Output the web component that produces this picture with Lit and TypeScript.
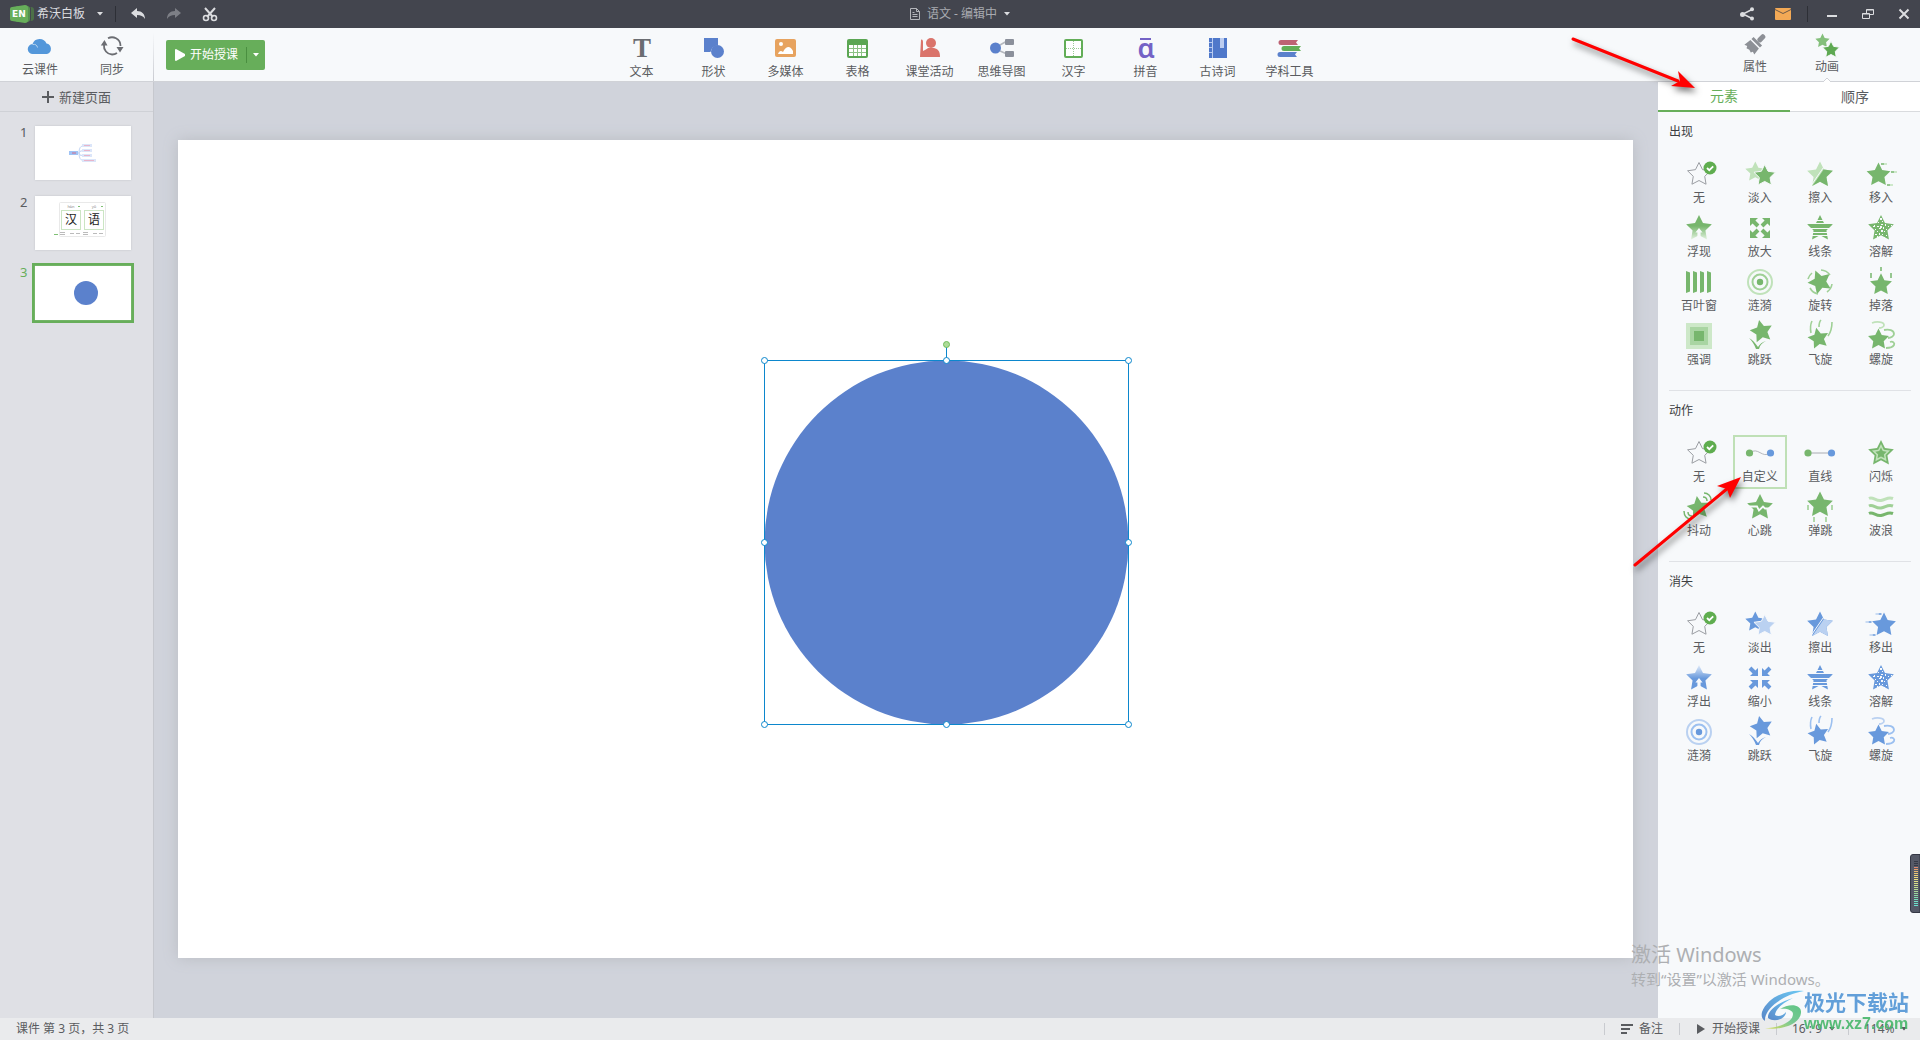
import { LitElement, html, svg, css } from "lit";
import { customElement, state } from "lit/decorators.js";
import { classMap } from "lit/directives/class-map.js";

interface Tone {
  name: string;
  dark: string;
  mid: string;
  light: string;
}

const GREEN: Tone = { name: "green", dark: "#77b66d", mid: "#9fd096", light: "#c0e2ba" };
const BLUE: Tone = { name: "blue", dark: "#6899dc", mid: "#9cc0f0", light: "#bad1f1" };
const PAPER = "#f7f9fb";

function starPoints(cx: number, cy: number, r: number, turn = 0, inner = 0.5): string {
  const pts: string[] = [];
  for (let i = 0; i < 10; i++) {
    const radius = i % 2 ? r * inner : r;
    const a = ((-90 + turn + i * 36) * Math.PI) / 180;
    pts.push(`${(cx + radius * Math.cos(a)).toFixed(2)},${(cy + radius * Math.sin(a)).toFixed(2)}`);
  }
  return pts.join(" ");
}

const star = (cx: number, cy: number, r: number, fill: string, turn = 0) =>
  svg`<polygon points=${starPoints(cx, cy, r, turn)} fill=${fill}></polygon>`;

const none = () => svg`
  <polygon points=${starPoints(16, 16.5, 12)} fill="none" stroke="#9b9ea3"></polygon>
  <circle cx="27" cy="10" r="6.5" fill="#5fad4f"></circle>
  <path d="M24 10l2.3 2.2 3.9-3.8" fill="none" stroke="#fff" stroke-width="1.8"></path>`;

const fade = (t: Tone, out: boolean) => svg`
  ${star(11.3, 14, 10.5, out ? t.dark : t.light)}
  <polygon points=${starPoints(20.7, 17.8, 11.3)} fill=${out ? t.light : t.dark} stroke=${PAPER} stroke-width="1"></polygon>`;

const wipe = (t: Tone, out: boolean) => svg`
  <clipPath id="wipe-${t.name}"><path d="M27.5 0H32V32H5.6z"></path></clipPath>
  ${star(16, 17, 13.5, out ? t.dark : t.light)}
  <g clip-path="url(#wipe-${t.name})">${star(16, 17, 13.5, out ? t.light : t.dark)}</g>
  <path d="M23.2 4L6.400 28.500" stroke=${PAPER} stroke-width="1"></path>`;

const slide = (t: Tone, out: boolean) => {
  const marks = svg`
    <path d="M16 6h3M26 14h3M22 27h3" stroke=${t.dark} stroke-width="1.6"></path>
    <path d="M19 6h3M29 14h3M25 27h3" stroke=${t.light} stroke-width="1.6"></path>`;
  return out
    ? svg`<g transform="translate(32.5 0) scale(-1 1)">${marks}${star(13.5, 17, 12.5, t.dark)}</g>`
    : svg`${marks}${star(13.5, 17, 12.5, t.dark)}`;
};

const float = (t: Tone, out: boolean) => svg`
  <linearGradient id="float-${t.name}" x1="0" y1="0" x2="0" y2="1">
    <stop offset=${out ? "0" : "0.45"} stop-color=${out ? "#e3edfa" : t.dark}></stop>
    <stop offset=${out ? "0.55" : "1"} stop-color=${out ? t.dark : "#e2f2df"}></stop>
  </linearGradient>
  <polygon points=${starPoints(16, 16.5, 13.5)} fill="url(#float-${t.name})"></polygon>
  <path d="M16 16l3.600 4.400h-2V26h-3.200v-5.600h-2z" fill=${PAPER}></path>`;

const cornerArrow = "M0 0h8L5.400 2.600l4 4-2.800 2.800-4-4L0 8z";
const zoomIn = (t: Tone) => svg`<g fill=${t.dark}>
  <path d=${cornerArrow} transform="translate(6 6)"></path>
  <path d=${cornerArrow} transform="translate(26 6) scale(-1 1)"></path>
  <path d=${cornerArrow} transform="translate(6 26) scale(1 -1)"></path>
  <path d=${cornerArrow} transform="translate(26 26) scale(-1 -1)"></path></g>`;
const zoomOut = (t: Tone) => svg`<g fill=${t.dark}>
  <path d=${cornerArrow} transform="translate(14 14) scale(-1 -1)"></path>
  <path d=${cornerArrow} transform="translate(18 14) scale(1 -1)"></path>
  <path d=${cornerArrow} transform="translate(14 18) scale(-1 1)"></path>
  <path d=${cornerArrow} transform="translate(18 18)"></path></g>`;

const lines = (t: Tone) => svg`
  ${star(16, 16.500, 13.500, t.dark)}
  <path d="M2 8.500h28M2 11.500h28M2 16.500h28M2 20.500h28M2 23.500h28" stroke=${PAPER} stroke-width="1"></path>`;

const SPECKS = [
  [15, 6], [17, 9], [13, 10], [16, 12], [20, 12], [9, 13], [12, 14], [23, 14], [18, 15], [14, 16],
  [21, 17], [10, 17], [16, 18], [12, 19], [19, 19], [23, 20], [14, 21], [17, 22], [10, 22], [21, 23],
  [12, 24], [8, 14], [26, 13], [19, 25], [15, 14],
];
const dissolve = (t: Tone) => svg`
  ${star(16, 16.500, 13.500, t.dark)}
  ${SPECKS.map(([x, y], i) => svg`<rect x=${x} y=${y} width=${i % 3 ? 1 : 2} height=${i % 4 ? 1 : 2} fill=${PAPER}></rect>`)}`;

const blinds = (t: Tone) => svg`<path fill=${t.dark}
  d="M3 5l4 1.500v19L3 27zM10 5l4 1.500v19L10 27zM17 5l4 1.500v19L17 27zM24 5l4 1.500v19L24 27z"></path>`;

const ripple = (t: Tone) => svg`
  <circle cx="16" cy="16" r="12" fill="none" stroke=${t.light} stroke-width="2"></circle>
  <circle cx="16" cy="16" r="7.500" fill="none" stroke=${t.mid} stroke-width="2"></circle>
  <circle cx="16" cy="16" r="3.200" fill=${t.dark}></circle>`;

const spin = (t: Tone) => svg`
  ${star(16, 16, 12.500, t.dark, -22)}
  <g fill="none" stroke=${t.mid} stroke-width="1.600">
    <path d="M17 4a12 12 0 0 1 9 5"></path><path d="M28 18a12 12 0 0 1-5 8"></path>
    <path d="M14 28a12 12 0 0 1-8-6"></path><path d="M4 13a12 12 0 0 1 4-6"></path>
  </g>`;

const drop = (t: Tone) => svg`
  ${star(16, 18.800, 11.500, t.dark)}
  <path d="M16 1v4M6 7v5M26 7v5" stroke=${t.dark} stroke-width="1.500"></path>`;

const emphasis = (t: Tone) => svg`
  <rect x="3" y="3" width="26" height="26" fill="#cde8c8"></rect>
  <rect x="7" y="7" width="18" height="18" fill="#a9d5a2"></rect>
  <rect x="11" y="11" width="10" height="10" fill=${t.dark}></rect>`;

const jump = (t: Tone) => svg`
  ${star(17.500, 11.500, 11.800, t.dark, -12)}
  <path d="M5 18c4 2 6 5 9 9 2-3 4-5 8-6-4 2-6 4-7 8h-3C10 24 8 21 5 18z" fill=${t.dark}></path>`;

const fly = (t: Tone) => svg`
  ${star(14.500, 18.500, 11, t.dark, -12)}
  <g fill="none" stroke=${t.mid} stroke-width="1.600">
    <path d="M8 1c-2 4-2 7-1 12"></path><path d="M17 0c-2 2-2 4-2 7"></path><path d="M28 2c0 6-1 10-4 14"></path>
  </g>`;

const spiral = (t: Tone) => svg`
  ${star(13.500, 19.500, 11, t.dark)}
  <g fill="none" stroke=${t.mid} stroke-width="1.800">
    <path d="M7 3c5-2 12-1 12 2 0 2-3 3-5 3" stroke=${t.light}></path>
    <path d="M19 10c5-1 10 0 10 4 0 2-3 4-6 4"></path>
    <path d="M25 22c3-1 5 1 4 3-1 2-5 3-8 3"></path>
  </g>`;

const custom = () => svg`
  <path d="M5.500 16c9-7 12 6 21 0" fill="none" stroke="#b5b8bd"></path>
  <circle cx="5.500" cy="16" r="3.600" fill="#77b66d"></circle><circle cx="26.500" cy="16" r="3.600" fill="#6899dc"></circle>`;
const straight = () => svg`
  <path d="M4 16h24" stroke="#a9acb2"></path>
  <circle cx="4" cy="16" r="3.600" fill="#77b66d"></circle><circle cx="27.500" cy="16" r="3.600" fill="#6899dc"></circle>`;
const flash = (t: Tone) => svg`
  ${star(16, 16.500, 13.500, t.dark)}${star(16, 16.500, 9.500, t.light)}${star(16, 16.500, 6, t.dark)}`;
const shake = (t: Tone) => svg`
  ${star(15.500, 17, 12, t.dark, -8)}
  <path d="M21 2c4 0 7 3 7 7M20 6c3 0 4 2 4 4M1 20c0 5 3 8 7 8M5 21c0 3 1 4 4 4" fill="none" stroke=${t.dark} stroke-width="1.500"></path>`;
const heartbeat = (t: Tone) => svg`
  ${star(16, 16.500, 13.500, t.dark)}
  <path d="M4 15.500h9l2 4 4-4 2 2h8" fill="none" stroke=${PAPER} stroke-width="1.800"></path>`;
const bounce = (t: Tone) => svg`
  ${star(16, 14, 13.500, t.dark)}
  <path d="M4 14v5M28 14v5M10 26v5M22 26v5" stroke=${t.mid} stroke-width="1.600"></path>`;
const wave = (t: Tone) => svg`<g fill="none" stroke-width="3">
  <path d="M4 7.500c4-2 7 3 12 2s7-4 12-2" stroke=${t.light}></path>
  <path d="M4 15c4-2 7 3 12 2s7-4 12-2" stroke=${t.mid}></path>
  <path d="M4 22.500c4-2 7 3 12 2s7-4 12-2" stroke=${t.dark}></path></g>`;

interface Effect {
  label: string;
  icon: unknown;
}

const SECTIONS: { title: string; effects: Effect[] }[] = [
  {
    title: "出现",
    effects: [
      { label: "无", icon: none() },
      { label: "淡入", icon: fade(GREEN, false) },
      { label: "擦入", icon: wipe(GREEN, false) },
      { label: "移入", icon: slide(GREEN, false) },
      { label: "浮现", icon: float(GREEN, false) },
      { label: "放大", icon: zoomIn(GREEN) },
      { label: "线条", icon: lines(GREEN) },
      { label: "溶解", icon: dissolve(GREEN) },
      { label: "百叶窗", icon: blinds(GREEN) },
      { label: "涟漪", icon: ripple(GREEN) },
      { label: "旋转", icon: spin(GREEN) },
      { label: "掉落", icon: drop(GREEN) },
      { label: "强调", icon: emphasis(GREEN) },
      { label: "跳跃", icon: jump(GREEN) },
      { label: "飞旋", icon: fly(GREEN) },
      { label: "螺旋", icon: spiral(GREEN) },
    ],
  },
  {
    title: "动作",
    effects: [
      { label: "无", icon: none() },
      { label: "自定义", icon: custom() },
      { label: "直线", icon: straight() },
      { label: "闪烁", icon: flash(GREEN) },
      { label: "抖动", icon: shake(GREEN) },
      { label: "心跳", icon: heartbeat(GREEN) },
      { label: "弹跳", icon: bounce(GREEN) },
      { label: "波浪", icon: wave(GREEN) },
    ],
  },
  {
    title: "消失",
    effects: [
      { label: "无", icon: none() },
      { label: "淡出", icon: fade(BLUE, true) },
      { label: "擦出", icon: wipe(BLUE, true) },
      { label: "移出", icon: slide(BLUE, true) },
      { label: "浮出", icon: float(BLUE, true) },
      { label: "缩小", icon: zoomOut(BLUE) },
      { label: "线条", icon: lines(BLUE) },
      { label: "溶解", icon: dissolve(BLUE) },
      { label: "涟漪", icon: ripple(BLUE) },
      { label: "跳跃", icon: jump(BLUE) },
      { label: "飞旋", icon: fly(BLUE) },
      { label: "螺旋", icon: spiral(BLUE) },
    ],
  },
];

const TOOLS: Effect[] = [
  {
    label: "文本",
    icon: svg`<text class="glyph-serif" x="12" y="21" text-anchor="middle">T</text>`,
  },
  {
    label: "形状",
    icon: svg`<path d="M2 2h14v7.500A7.500 7.500 0 0 0 8.500 16H2z" fill="#5b81cc"></path><circle cx="15.500" cy="15.500" r="6.500" fill="#5b81cc"></circle>`,
  },
  {
    label: "多媒体",
    icon: svg`<rect x="1" y="3" width="21" height="18" rx="2" fill="#e7a35f"></rect><circle cx="7" cy="8" r="2" fill="#fff"></circle>
      <path d="M4 18c1-3 3-4 5-2 3-6 7-7 10-1v3z" fill="#fff"></path>`,
  },
  {
    label: "表格",
    icon: svg`<rect x="1" y="3" width="21" height="19" rx="2" fill="#5ba653"></rect><rect x="3" y="9" width="17" height="11" fill="#fff"></rect>
      <path d="M3 12.500h17M3 16.500h17M7.500 9v11M11.500 9v11M15.500 9v11" stroke="#8cc285"></path>`,
  },
  {
    label: "课堂活动",
    icon: svg`<g fill="#da746b"><circle cx="13" cy="7" r="5"></circle><path d="M3 4c1-1 2 0 2 2v9c2-1 4-2 5-3h6c4 1 6 3 6 9H2z"></path></g>`,
  },
  {
    label: "思维导图",
    icon: svg`<path d="M10 9l7-4M10 15l7 3" stroke="#b4b8be" stroke-width="1.500"></path><circle cx="5.500" cy="12" r="5.500" fill="#5b81cc"></circle>
      <rect x="15" y="3" width="9" height="6" rx="1" fill="#8b909b"></rect><rect x="15" y="15" width="9" height="6" rx="1" fill="#8b909b"></rect>`,
  },
  {
    label: "汉字",
    icon: svg`<rect x="3" y="4" width="17" height="17" rx="1" fill="#fff" stroke="#62ad57" stroke-width="2"></rect>
      <path d="M11.500 5v15M4 12.500h15" stroke="#9ccb95" stroke-dasharray="1 1"></path>`,
  },
  {
    label: "拼音",
    icon: svg`<rect x="6" y="2" width="11" height="2" fill="#7463c6"></rect><text class="glyph-sans" x="12" y="22" text-anchor="middle">ɑ</text>`,
  },
  {
    label: "古诗词",
    icon: svg`<rect x="3" y="2" width="18" height="20" fill="#4f78ca"></rect><path d="M6.500 2v20" stroke="#b9cbf0"></path>
      <path d="M3 6.500h3M3 11.500h3M3 16.500h3" stroke="#b9cbf0"></path><rect x="14" y="2" width="4" height="10" fill="#bccdf0"></rect>`,
  },
  {
    label: "学科工具",
    icon: svg`<path d="M3 4h17l-2 2.500 2 2.500H3a2.500 2.500 0 0 1 0-5z" fill="#bd6273"></path>
      <path d="M6 10h17l-2 2.500 2 2.500H6a2.500 2.500 0 0 1 0-5z" fill="#62ad57"></path>
      <path d="M2 16h17l-2 2.500 2 2.500H2a2.500 2.500 0 0 1 0-5z" fill="#5b81cc"></path>`,
  },
];

const CARET = html`<svg class="caret" viewBox="0 0 6 4" width="6" height="4" aria-hidden="true"><path d="M0 0h6L3 3.500z" fill="currentColor"></path></svg>`;

const METER = ["#353946", "#353946", "#353946", "#e0896f", "#e5a06c", "#e9b870", "#ebc873", "#edd277", "#eeda7b", "#ecdf80", "#e3df86", "#d9de88", "#cfde8b", "#c2dc8f", "#b5da93", "#a8d998", "#9bd99d", "#8edaa5", "#82dcae", "#79dfb9", "#72e1c4", "#6ce1ca", "#68e2d0"];

@customElement("app-root")
export class AppRoot extends LitElement {
  @state() private slide = 3;
  @state() private tab = 0;
  @state() private action = "自定义";

  static styles = css`
    :host {
      display: flex;
      flex-direction: column;
      position: relative;
      height: 100vh;
      min-height: 800px;
      overflow: hidden;
      background: #d0d3db;
      color: #5a5c60;
      font-family: "Noto Sans", "Noto Sans CJK SC", sans-serif;
      font-size: 12px;
      line-height: 16px;
    }
    * { box-sizing: border-box; }
    button, select {
      margin: 0;
      padding: 0;
      border: 0;
      background: none;
      color: inherit;
      font: inherit;
      cursor: pointer;
      white-space: nowrap;
    }
    svg { display: block; flex: none; overflow: visible; }

    .titlebar {
      display: grid;
      grid-template-columns: 1fr auto 1fr;
      align-items: center;
      height: 28px;
      flex: none;
      background: #43454e;
      color: #dcdde0;
    }
    .bar-group { display: flex; align-items: center; gap: 4px; }
    .bar-group.end { justify-content: flex-end; }
    .bar-button { display: flex; align-items: center; justify-content: center; width: 32px; height: 28px; }
    .app-menu { display: flex; align-items: center; gap: 3px; padding: 0 8px 0 10px; }
    .app-menu .caret { margin-left: 9px; }
    .bar-line { width: 1px; height: 16px; background: #2d2f36; }
    .bar-line.spaced { margin: 0 4px; }
    .bar-line.after { margin-right: 2px; }
    .doc { display: flex; align-items: center; gap: 7px; color: #a9abb1; }
    .doc .caret { color: #dcdde0; }
    .logo-text { font: bold 9px "DejaVu Sans", sans-serif; fill: #fff; }

    .toolbar {
      display: flex;
      flex: none;
      height: 54px;
      background: #f7f9fb;
      border-bottom: 1px solid #d0d2d7;
    }
    .cloud {
      display: flex;
      width: 154px;
      padding-left: 4px;
      border-right: 1px solid;
      border-image: linear-gradient(#f7f9fb 10%, #c8cad0) 1;
    }
    .tool {
      display: flex;
      flex-direction: column;
      align-items: center;
      width: 72px;
      padding-top: 8px;
      gap: 4px;
    }
    .cloud .tool { padding-top: 6px; }
    .tools { display: flex; flex: 1; justify-content: center; }
    .side-tools { display: flex; justify-content: center; width: 262px; padding-left: 4px; }
    .side-tools .tool { position: relative; padding-top: 4px; gap: 3px; }
    .notch { position: absolute; bottom: -1px; left: 32px; }
    .glyph-serif { font: bold 27px "Liberation Serif", serif; fill: #6b6d72; }
    .glyph-sans { font: 600 27px "Noto Sans", sans-serif; fill: #7463c6; }
    .start {
      display: flex;
      align-items: center;
      align-self: flex-start;
      height: 30px;
      margin: 12px 8px 0 12px;
      border-radius: 2px;
      background: #67ae5a;
      color: #fff;
    }
    .start-main { display: flex; align-items: center; gap: 5px; height: 30px; padding: 0 8px 0 9px; }
    .start-more { display: flex; align-items: center; justify-content: center; width: 19px; height: 16px; border-left: 1px solid #4a8f40; }

    .body { display: flex; flex: 1; min-height: 0; }
    .pages { width: 154px; flex: none; background: #dfe0e5; border-right: 1px solid #c6c8ce; }
    .new-page {
      display: flex;
      align-items: center;
      justify-content: center;
      gap: 5px;
      width: 100%;
      height: 30px;
      border-bottom: 1px solid #cfd1d6;
      font-size: 13px;
    }
    .page-list { display: flex; flex-direction: column; gap: 10px; margin: 0; padding: 11px 0 0; list-style: none; }
    .page-item { display: flex; align-items: flex-start; gap: 4px; width: 100%; padding-left: 20px; text-align: left; font-size: 13px; }
    .page-number { width: 8px; line-height: 18px; }
    .thumb { padding: 3px; }
    .thumb svg { background: #fff; box-shadow: 0 0 2px #c0c2c8; }
    .page-item.current { color: #67ae5a; }
    .page-item.current .thumb { background: #67ae5a; }
    .page-item.current svg { box-shadow: 0 0 1px #b0d6a9; }
    .thumb-char { font: 12px "Noto Sans CJK SC", sans-serif; fill: #222; }
    .thumb-pinyin { font: 4px "Noto Sans", sans-serif; fill: #888; }

    .stage { display: flex; flex: 1; min-width: 0; align-items: center; padding: 0 25px 3px 24px; }
    .paper { width: 100%; aspect-ratio: 1455 / 818; background: #fff; box-shadow: 0 0 14px #b9bcc2; }

    .panel { width: 262px; flex: none; background: #f7f9fb; }
    .tabs { display: grid; grid-template-columns: 132px 1fr; height: 30px; background: #fff; }
    .tab { border-bottom: 1px solid #d9dbde; font-size: 14px; }
    .tab.on { border-bottom: 2px solid #67ae5a; color: #67ae5a; }
    .effects { margin: 0 9px 0 11px; padding: 10px 0 18px; border-bottom: 1px solid #e0e2e6; }
    .effects:last-child { border-bottom: 0; }
    .effects-title { margin: 0 0 14px; font-size: 12px; font-weight: 400; line-height: 20px; color: #3c3e42; }
    .effect-grid { display: grid; grid-template-columns: repeat(4, 54px); justify-content: space-between; padding: 0 3px; }
    .effect { display: flex; flex-direction: column; align-items: center; height: 54px; padding: 2px 0 0; }
    .effect.on { padding-top: 0; border: 2px solid #bfe0b6; }

    .status { display: flex; align-items: center; flex: none; height: 22px; padding-left: 16px; background: #eaebed; }
    .status-text { flex: 1; }
    .status-cell { display: flex; align-items: center; justify-content: center; height: 12px; border-left: 1px solid #c9cbd0; gap: 6px; padding: 0 16px; }
    .status-cell.pick { padding: 0 13px 0 15px; }
    .status-cell select { appearance: none; line-height: 16px; }

    .arrow { position: absolute; filter: drop-shadow(2px 4px 3px #0008); pointer-events: none; }
    .arrow.top { top: 36px; right: 220px; }
    .arrow.middle { top: 474px; right: 178px; }
    .activate { position: absolute; right: 90px; bottom: 51px; width: 199px; color: #adafb2; pointer-events: none; white-space: nowrap; }
    .activate-title { margin: 0; font-size: 20px; line-height: 28px; }
    .activate-note { margin: 0; font-size: 15px; line-height: 20px; }
    .site { position: absolute; right: 8px; bottom: 7px; display: flex; opacity: 0.9; pointer-events: none; white-space: nowrap; }
    .site-words { display: flex; flex-direction: column; width: 108px; }
    .site-name { font-size: 21px; line-height: 26px; font-weight: 700; color: #5296d6; }
    .site-url { font: bold 16px/18px "Liberation Sans", sans-serif; color: #47b76b; }
    .meter { position: absolute; right: 0; top: 854px; }
  `;

  private renderTool(tool: Effect) {
    return html`<button class="tool"><svg width="24" height="24" viewBox="0 0 24 24" aria-hidden="true">${tool.icon}</svg><span>${tool.label}</span></button>`;
  }

  private renderTitlebar() {
    return html`<header class="titlebar">
      <div class="bar-group">
        <button class="app-menu">
          <svg width="24" height="18" viewBox="0 0 24 18" aria-hidden="true">
            <rect x="8" y="2" width="16" height="14" rx="3" fill="#4c7048"></rect>
            <rect x="5" y="1" width="16" height="16" rx="3" fill="#43454e"></rect>
            <rect x="5" y="1" width="15" height="16" rx="3" fill="#569150"></rect>
            <path d="M2 2l13-2q3 0 3 3v12q0 3-3 3L2 16q-2 0-2-2V4q0-2 2-2z" fill="#67ae5a"></path>
            <text class="logo-text" x="2" y="12">EN</text>
          </svg>
          <span>希沃白板</span>${CARET}
        </button>
        <span class="bar-line after"></span>
        <button class="bar-button" aria-label="撤销">
          <svg width="16" height="14" viewBox="0 0 16 14"><path d="M1 6l6-5v3c5 0 8 3 8 8-2-3-4-4-8-4v3z" fill="#dcdde0"></path></svg>
        </button>
        <button class="bar-button" aria-label="重做">
          <svg width="16" height="14" viewBox="0 0 16 14"><path d="M15 6L9 1v3c-5 0-8 3-8 8 2-3 4-4 8-4v3z" fill="#7d7f86"></path></svg>
        </button>
        <button class="bar-button" aria-label="剪切">
          <svg width="16" height="16" viewBox="0 0 16 16" fill="none" stroke="#dcdde0">
            <path d="M3 2l8 9M13 2l-8 9" stroke-width="2"></path>
            <circle cx="4" cy="12" r="2.500" stroke-width="1.600"></circle><circle cx="12" cy="12" r="2.500" stroke-width="1.600"></circle>
          </svg>
        </button>
      </div>
      <button class="doc">
        <svg width="10" height="12" viewBox="0 0 10 12" fill="none" stroke="#b4b6bb" aria-hidden="true"><path d="M.5.5H6.500l3 3v8h-9zM6.500.5v3h3M2.500 6.500h5M2.500 8.500h5M2.500 4.500h2"></path></svg>
        <span>语文 - 编辑中</span>${CARET}
      </button>
      <div class="bar-group end">
        <button class="bar-button" aria-label="分享">
          <svg width="14" height="14" viewBox="0 0 14 14"><path d="M12 2.500L3 7l9 4.500" fill="none" stroke="#dcdde0" stroke-width="1.500"></path>
            <g fill="#dcdde0"><circle cx="12" cy="2.300" r="2"></circle><circle cx="2.500" cy="7.500" r="2.500"></circle><circle cx="12" cy="11.500" r="2"></circle></g></svg>
        </button>
        <button class="bar-button" aria-label="消息">
          <svg width="16" height="12" viewBox="0 0 16 12"><rect width="16" height="12" rx="1" fill="#f3a955"></rect><path d="M0 1.500l8 4 8-4" fill="none" stroke="#6e5a48"></path></svg>
        </button>
        <span class="bar-line spaced"></span>
        <button class="bar-button" aria-label="最小化"><svg width="10" height="10" viewBox="0 0 10 10"><path d="M0 7h10" stroke="#dcdde0" stroke-width="2"></path></svg></button>
        <button class="bar-button" aria-label="还原">
          <svg width="12" height="10" viewBox="0 0 12 10" fill="none" stroke="#dcdde0"><path d="M.5 4.500h7v5h-7zM4.500 4V.5h7v5H8M.5 5h7M4.500 1h7"></path></svg>
        </button>
        <button class="bar-button" aria-label="关闭"><svg width="10" height="10" viewBox="0 0 10 10"><path d="M.5.5l9 9M9.500.5l-9 9" stroke="#dcdde0" stroke-width="2"></path></svg></button>
      </div>
    </header>`;
  }

  private renderToolbar() {
    return html`<nav class="toolbar">
      <div class="cloud">
        ${this.renderTool({
          label: "云课件",
          icon: svg`<path d="M5 20a5 5 0 0 1-.5-10A7.500 7.500 0 0 1 18.500 9.500 5.400 5.400 0 0 1 19 20z" fill="#5397da"></path><path d="M4.500 10.500c3-.5 4.500.5 5 3" fill="none" stroke="#b8d5f0"></path>`,
        })}
        ${this.renderTool({
          label: "同步",
          icon: svg`<path d="M16 4.300A8.500 8.500 0 0 0 8 4.300M4 11a8.500 8.500 0 0 0 8 9.500M20.500 12a8.500 8.500 0 0 0-4.500-7.700M12 20.500a8.500 8.500 0 0 0 5-1.500" fill="none" stroke="#6b6d72" stroke-width="1.800"></path><path d="M.8 11.500L4.500 6l3 5.500zM16.500 13L20 18.500 23.500 13z" fill="#6b6d72"></path>`,
        })}
      </div>
      <div class="start">
        <button class="start-main">
          <svg width="10" height="12" viewBox="0 0 10 12" aria-hidden="true"><path d="M1 0l9 5v2l-9 5q-1 0-1-1V1q0-1 1-1z" fill="#fff"></path></svg>
          <span>开始授课</span>
        </button>
        <button class="start-more" aria-label="更多授课方式">${CARET}</button>
      </div>
      <div class="tools">${TOOLS.map((t) => this.renderTool(t))}</div>
      <div class="side-tools">
        ${this.renderTool({
          label: "属性",
          icon: svg`<g fill="#8d9096" transform="rotate(45 12 12)"><rect x="10" y="-1" width="5" height="9" rx="2"></rect><path d="M6 8h12v3H6zM6 12.500h12l1 7.500-3-1-1 2-3-1-3 1-1-2-3 1z"></path></g>`,
        })}
        <button class="tool">
          <svg width="24" height="24" viewBox="0 0 24 24" aria-hidden="true">
            ${star(7.500, 9, 7.500, "#84bf7b")}
            <polygon points=${starPoints(16, 18, 9)} fill="#5ea952" stroke="#f7f9fb"></polygon>
          </svg>
          <span>动画</span>
          <svg class="notch" width="8" height="5" viewBox="0 0 8 5" aria-hidden="true"><path d="M0 5l4-4 4 4" fill="#fff" stroke="#d0d2d7"></path></svg>
        </button>
      </div>
    </nav>`;
  }

  private renderPages() {
    const thumbs = [
      svg`<rect x="34" y="25" width="9" height="4" fill="#9fc3f5"></rect><path d="M37 27h4" stroke="#d06a8c"></path>
        <path d="M43 27h1q0-7 4-7M44 27q0-2 4-2.500M44 27q0 3 4 2.500M44 27q0 7 4 7.500" fill="none" stroke="#c3d5f5"></path>
        <g fill="#dbe5f9"><rect x="47" y="18" width="10" height="3"></rect><rect x="47" y="23" width="10" height="3"></rect><rect x="47" y="28" width="10" height="3"></rect><rect x="47" y="33" width="14" height="3"></rect></g>
        <path d="M49 19.500h6M49 24.500h6M49 29.500h6M49 34.500h10" stroke="#e7b5cb"></path>`,
      svg`<rect x="24.500" y="6.500" width="46" height="34" rx="1" fill="#fff" stroke="#e9e9e9"></rect>
        <g fill="#fff" stroke="#cbe5c3"><rect x="26.500" y="14.500" width="19" height="19"></rect><rect x="49.500" y="14.500" width="19" height="19"></rect></g>
        <text class="thumb-pinyin" x="36" y="12" text-anchor="middle">hàn</text><text class="thumb-pinyin" x="59" y="12" text-anchor="middle">yǔ</text>
        <text class="thumb-char" x="36" y="28" text-anchor="middle">汉</text><text class="thumb-char" x="59" y="28" text-anchor="middle">语</text>
        <path d="M43 10.500h2M66 10.500h2M19 38.500h4" stroke="#7fc074"></path>
        <path d="M25 36.500h5M35 37.500h4M41 37.500h4M48 36.500h5M58 37.500h4M64 37.500h4M25 38.500h5M48 38.500h5" stroke="#bbb"></path>`,
      svg`<circle cx="51" cy="27" r="12" fill="#5b81cc"></circle>`,
    ];
    return html`<aside class="pages">
      <button class="new-page">
        <svg width="12" height="12" viewBox="0 0 12 12" aria-hidden="true"><path d="M6 0v12M0 6h12" stroke="#5a5c60" stroke-width="2"></path></svg>
        <span>新建页面</span>
      </button>
      <ol class="page-list">
        ${thumbs.map((t, i) => html`<li><button class=${classMap({ "page-item": true, current: this.slide === i + 1 })} @click=${() => (this.slide = i + 1)}>
          <span class="page-number">${i + 1}</span>
          <span class="thumb"><svg width="96" height="54" viewBox="0 0 96 54" aria-hidden="true">${t}</svg></span>
        </button></li>`)}
      </ol>
    </aside>`;
  }

  private renderStage() {
    const handles = [[586.5, 220.5], [768.5, 220.5], [950.5, 220.5], [586.5, 402.5], [950.5, 402.5], [586.5, 584.5], [768.5, 584.5], [950.5, 584.5]];
    return html`<main class="stage">
      <svg class="paper" viewBox="0 0 1455 818" role="img" aria-label="圆形">
        <circle cx="768.5" cy="402.5" r="182" fill="#5b81cc"></circle>
        <path d="M586.500 220.500h364v364h-364zM768.500 204v16" fill="none" stroke="#0c87cd"></path>
        ${handles.map(([x, y]) => svg`<circle cx=${x} cy=${y} r="3" fill="#fff" stroke="#0c87cd"></circle>`)}
        <circle cx="768.5" cy="204.5" r="3" fill="#aedb98" stroke="#6fbd5c"></circle>
      </svg>
    </main>`;
  }

  private renderPanel() {
    return html`<aside class="panel">
      <div class="tabs" role="tablist">
        ${["元素", "顺序"].map((t, i) => html`<button role="tab" aria-selected=${this.tab === i} class=${classMap({ tab: true, on: this.tab === i })} @click=${() => (this.tab = i)}>${t}</button>`)}
      </div>
      ${SECTIONS.map((s) => html`<section class="effects">
        <h2 class="effects-title">${s.title}</h2>
        <div class="effect-grid">
          ${s.effects.map((e) => html`<button class=${classMap({ effect: true, on: e.label === this.action })} @click=${() => (this.action = e.label)}>
            <svg width="32" height="32" viewBox="0 0 32 32" aria-hidden="true">${e.icon}</svg><span>${e.label}</span>
          </button>`)}
        </div>
      </section>`)}
    </aside>`;
  }

  private renderStatus() {
    return html`<footer class="status">
      <span class="status-text">课件 第 3 页，共 3 页</span>
      <button class="status-cell">
        <svg width="12" height="10" viewBox="0 0 12 10" aria-hidden="true"><path d="M0 1h12M0 5h9M0 9h6" stroke="#5a5c60" stroke-width="2"></path></svg><span>备注</span>
      </button>
      <button class="status-cell">
        <svg width="10" height="10" viewBox="0 0 10 10" aria-hidden="true"><path d="M1 0l8 5-8 5z" fill="#5a5c60"></path></svg><span>开始授课</span>
      </button>
      <label class="status-cell pick"><select aria-label="页面比例"><option>16 : 9</option></select>${CARET}</label>
      <label class="status-cell pick"><select aria-label="缩放比例"><option>114%</option></select>${CARET}</label>
    </footer>`;
  }

  private renderOverlays() {
    return html`
      <svg class="arrow top" width="130" height="56" viewBox="0 0 130 56" aria-hidden="true">
        <path d="M3 3L108 45" stroke="#f00" stroke-width="3" stroke-linecap="round"></path><path d="M125 52L101 50l9-5-2-10z" fill="#f00"></path>
      </svg>
      <svg class="arrow middle" width="110" height="94" viewBox="0 0 110 94" aria-hidden="true">
        <path d="M3 91L96 14" stroke="#f00" stroke-width="3" stroke-linecap="round"></path><path d="M109 3L98 24l-3-9-10-3z" fill="#f00"></path>
      </svg>
      <div class="activate"><p class="activate-title">激活 Windows</p><p class="activate-note">转到“设置”以激活 Windows。</p></div>
      <div class="site">
        <svg width="44" height="44" viewBox="0 0 44 44" aria-hidden="true">
          <linearGradient id="swoosh-blue" x1="0" y1="1" x2="1" y2="0"><stop offset="0" stop-color="#4a7cc4"></stop><stop offset="1" stop-color="#5cc3f2"></stop></linearGradient>
          <linearGradient id="swoosh-green" x1="0" y1="1" x2="1" y2="0"><stop offset="0" stop-color="#d9dc4e"></stop><stop offset=".5" stop-color="#6cc58a"></stop><stop offset="1" stop-color="#4fbf78"></stop></linearGradient>
          <path d="M44 2C27 0 8 8 2 23c-1 4 0 7 3 9C4 20 22 6 44 2z" fill="url(#swoosh-blue)"></path>
          <path d="M33 9C16 14 7 23 8 29c6 5 18 1 18-6-3 4-8 5-11 3 0-5 7-12 18-17z" fill="url(#swoosh-blue)"></path>
          <path d="M20 20c9-6 22-5 21 4-1 11-20 18-36 15 14 0 28-6 28-14 0-4-7-6-13-5z" fill="url(#swoosh-green)"></path>
        </svg>
        <div class="site-words"><span class="site-name">极光下载站</span><span class="site-url">www.xz7.com</span></div>
      </div>
      <svg class="meter" width="10" height="59" viewBox="0 0 10 59" aria-hidden="true">
        <path d="M10 .5H3Q.5.5.5 3v53q0 2.500 2.500 2.500h7z" fill="#555967" stroke="#353845"></path>
        ${METER.map((c, i) => svg`<rect x="4" y=${7 + i * 2} width="4" height="1" fill=${c}></rect>`)}
      </svg>`;
  }

  render() {
    return html`${this.renderTitlebar()}${this.renderToolbar()}
      <div class="body">${this.renderPages()}${this.renderStage()}${this.renderPanel()}</div>
      ${this.renderStatus()}${this.renderOverlays()}`;
  }
}
